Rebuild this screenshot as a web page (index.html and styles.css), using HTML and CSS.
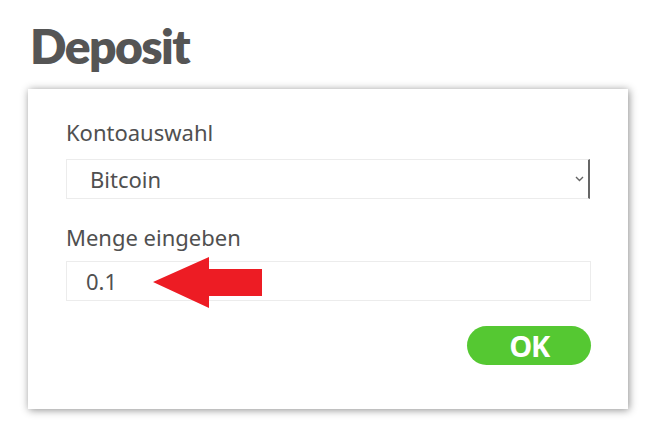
FILE: index.html
```html
<!DOCTYPE html>
<html lang="de">
<head>
<meta charset="utf-8">
<link rel="stylesheet" href="styles.css">
</head>
<body>
<main class="page">
  <h1 class="title">Deposit</h1>
  <section class="card">
    <label class="label">Kontoauswahl</label>
    <div class="select">
      <span class="select-value">Bitcoin</span>
      <svg class="chevron" width="9" height="6" viewBox="0 0 9 6"><path d="M1 1 L4.5 4.5 L8 1" fill="none" stroke="#666" stroke-width="1.4"/></svg>
    </div>
    <label class="label label-second">Menge eingeben</label>
    <div class="input-wrap">
      <input class="input" type="text" value="0.1">
      <svg class="arrow" width="110" height="51" viewBox="0 0 110 51"><polygon points="0,25 56,0 56,12 109,12 109,39 56,39 56,51" fill="#ed1c24"/></svg>
    </div>
    <div class="actions">
      <button class="ok">OK</button>
    </div>
  </section>
</main>
</body>
</html>
```

FILE: styles.css
```css
html, body {
  margin: 0;
  padding: 0;
  background: #fff;
}
.page {
  box-sizing: border-box;
  min-height: 435px;
  padding: 18px 0 26px 28px;
}
.title {
  margin: 0 0 0 2px;
  font-family: "Lato", "DejaVu Sans", sans-serif;
  font-weight: 800;
  font-size: 48px;
  line-height: 56px;
  color: #555;
  letter-spacing: -1.6px;
}
.card {
  box-sizing: border-box;
  width: 600px;
  height: 320px;
  margin-top: 15px;
  padding: 29px 37px 0 38px;
  background: #fff;
  box-shadow: 1px 1px 8px rgba(0,0,0,0.45);
  display: flex;
  flex-direction: column;
}
.label {
  font-family: "Noto Sans", "Open Sans", sans-serif;
  font-size: 22px;
  line-height: 29px;
  color: #505050;
}
.label-second {
  margin-top: 24px;
}
.select {
  margin-top: 12px;
  box-sizing: border-box;
  height: 40px;
  width: 524px;
  border: 1px solid #ececec;
  border-right: 2px solid #666;
  display: flex;
  align-items: center;
  justify-content: space-between;
  padding: 0 4px 0 23px;
}
.select-value, .input {
  font-family: "Noto Sans", "Open Sans", sans-serif;
  font-size: 22px;
  color: #505050;
}
.input-wrap {
  position: relative;
  margin-top: 9px;
}
.input {
  box-sizing: border-box;
  width: 525px;
  height: 40px;
  border: 1px solid #ececec;
  padding: 0 0 0 19px;
  outline: none;
  display: block;
}
.arrow {
  position: absolute;
  left: 87px;
  top: -4px;
}
.actions {
  display: flex;
  justify-content: flex-end;
  margin-top: 25px;
}
.ok {
  width: 124px;
  height: 39px;
  border: none;
  border-radius: 20px;
  background: #55c832;
  color: #fff;
  font-family: "Open Sans", "Noto Sans", sans-serif;
  font-weight: 700;
  font-size: 29px;
  letter-spacing: -1.5px;
  padding: 0;
  line-height: 39px;
}
```
